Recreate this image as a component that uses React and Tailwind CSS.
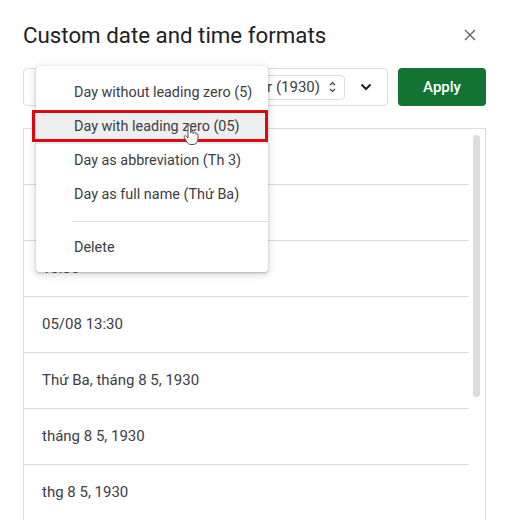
import React from "react";

const rows = ["5/8/1930", "05/08/1930", "13:30", "05/08 13:30", "Thứ Ba, tháng 8 5, 1930", "tháng 8 5, 1930", "thg 8 5, 1930"];

function Hand() {
  return (
    <svg width="16" height="22" viewBox="0 0 16 22" className="absolute left-[183px] top-[124px]">
      <path
        d="M5 2.2a1.3 1.3 0 0 1 2.6 0V9a1.3 1.3 0 0 1 2.6 0v.6a1.3 1.3 0 0 1 2.6 0v.8a1.2 1.2 0 0 1 2.2.4V15c0 3-2 5.5-5 5.5H8c-2 0-3.2-1-4.2-2.6L1.4 13.6a1.2 1.2 0 0 1 2-1.4L5 14Z"
        fill="#fff"
        stroke="#555"
        strokeWidth="1"
        strokeLinejoin="round"
      />
    </svg>
  );
}

export default function App() {
  return (
    <div className="relative w-[507px] h-[520px] overflow-hidden bg-white font-['Roboto',sans-serif] text-[#3c4043]">
      <div className="pl-[23px] pr-[21px]">
        <div className="mt-[18px] h-[34px] flex items-center justify-between">
          <div className="text-[22.3px] text-[#202124] leading-none">Custom date and time formats</div>
          <svg width="12" height="12" viewBox="0 0 12 12" className="mr-[10px]">
            <path d="M1 1L11 11M11 1L1 11" stroke="#5f6368" strokeWidth="1.4" />
          </svg>
        </div>
        <div className="mt-[16px] flex gap-[10px] h-[38px]">
          <div className="flex-1 flex items-center border border-[#dadce0] rounded-[4px] overflow-hidden">
            <div className="flex-1 flex justify-end items-center">
              <div className="h-[25px] flex items-center border border-[#dadce0] rounded-[4px] pl-[8px] pr-[8px] text-[15px] text-[#3c4043]">
                <span>Year (1930)</span>
                <svg width="7" height="14" viewBox="0 0 7 14" className="ml-[9px]">
                  <path d="M1 5L3.5 2.5L6 5M1 9L3.5 11.5L6 9" fill="none" stroke="#3c4043" strokeWidth="1.2" />
                </svg>
              </div>
            </div>
            <div className="w-[42px] flex justify-center">
              <svg width="12" height="8" viewBox="0 0 12 8">
                <path d="M1.5 1.5L6 6L10.5 1.5" fill="none" stroke="#202124" strokeWidth="2" />
              </svg>
            </div>
          </div>
          <button className="w-[88px] h-[38px] rounded-[4px] bg-[#137333] text-white text-[15px] font-medium">Apply</button>
        </div>
        <div className="mt-[22px] border border-[#dadce0] flex h-[420px]">
          <div className="flex-1">
            {rows.map((r) => (
              <div key={r} className="h-[56px] border-b border-[#dadce0] flex items-center pl-[18px] text-[15px] text-[#3c4043]">
                {r}
              </div>
            ))}
          </div>
          <div className="w-[16px] pl-[4px] pt-[6px]">
            <div className="w-[7px] h-[262px] rounded-full bg-[#dadce0]" />
          </div>
        </div>
      </div>

      <div className="absolute left-[36px] top-[66px] w-[232px] h-[206px] bg-white rounded-[4px] shadow-[0_2px_6px_2px_rgba(60,64,67,0.15),0_1px_2px_rgba(60,64,67,0.3)] pt-[10px] text-[14.4px] text-[#3c4043]">
        <div className="h-[34px] flex items-center pl-[38px]">Day without leading zero (5)</div>
        <div className="h-[34px] flex items-center pl-[38px] bg-[#eeeff1]">Day with leading zero (05)</div>
        <div className="h-[34px] flex items-center pl-[38px]">Day as abbreviation (Th 3)</div>
        <div className="h-[34px] flex items-center pl-[38px]">Day as full name (Thứ Ba)</div>
        <div className="h-[19px] flex items-center pl-[36px]">
          <div className="h-px w-full bg-[#e0e0e0]" />
        </div>
        <div className="h-[34px] flex items-center pl-[38px]">Delete</div>
      </div>
      <div className="absolute left-[32px] top-[110px] w-[236px] h-[32px] border-[3px] border-[#d90a10]" />
      <Hand />
    </div>
  );
}
